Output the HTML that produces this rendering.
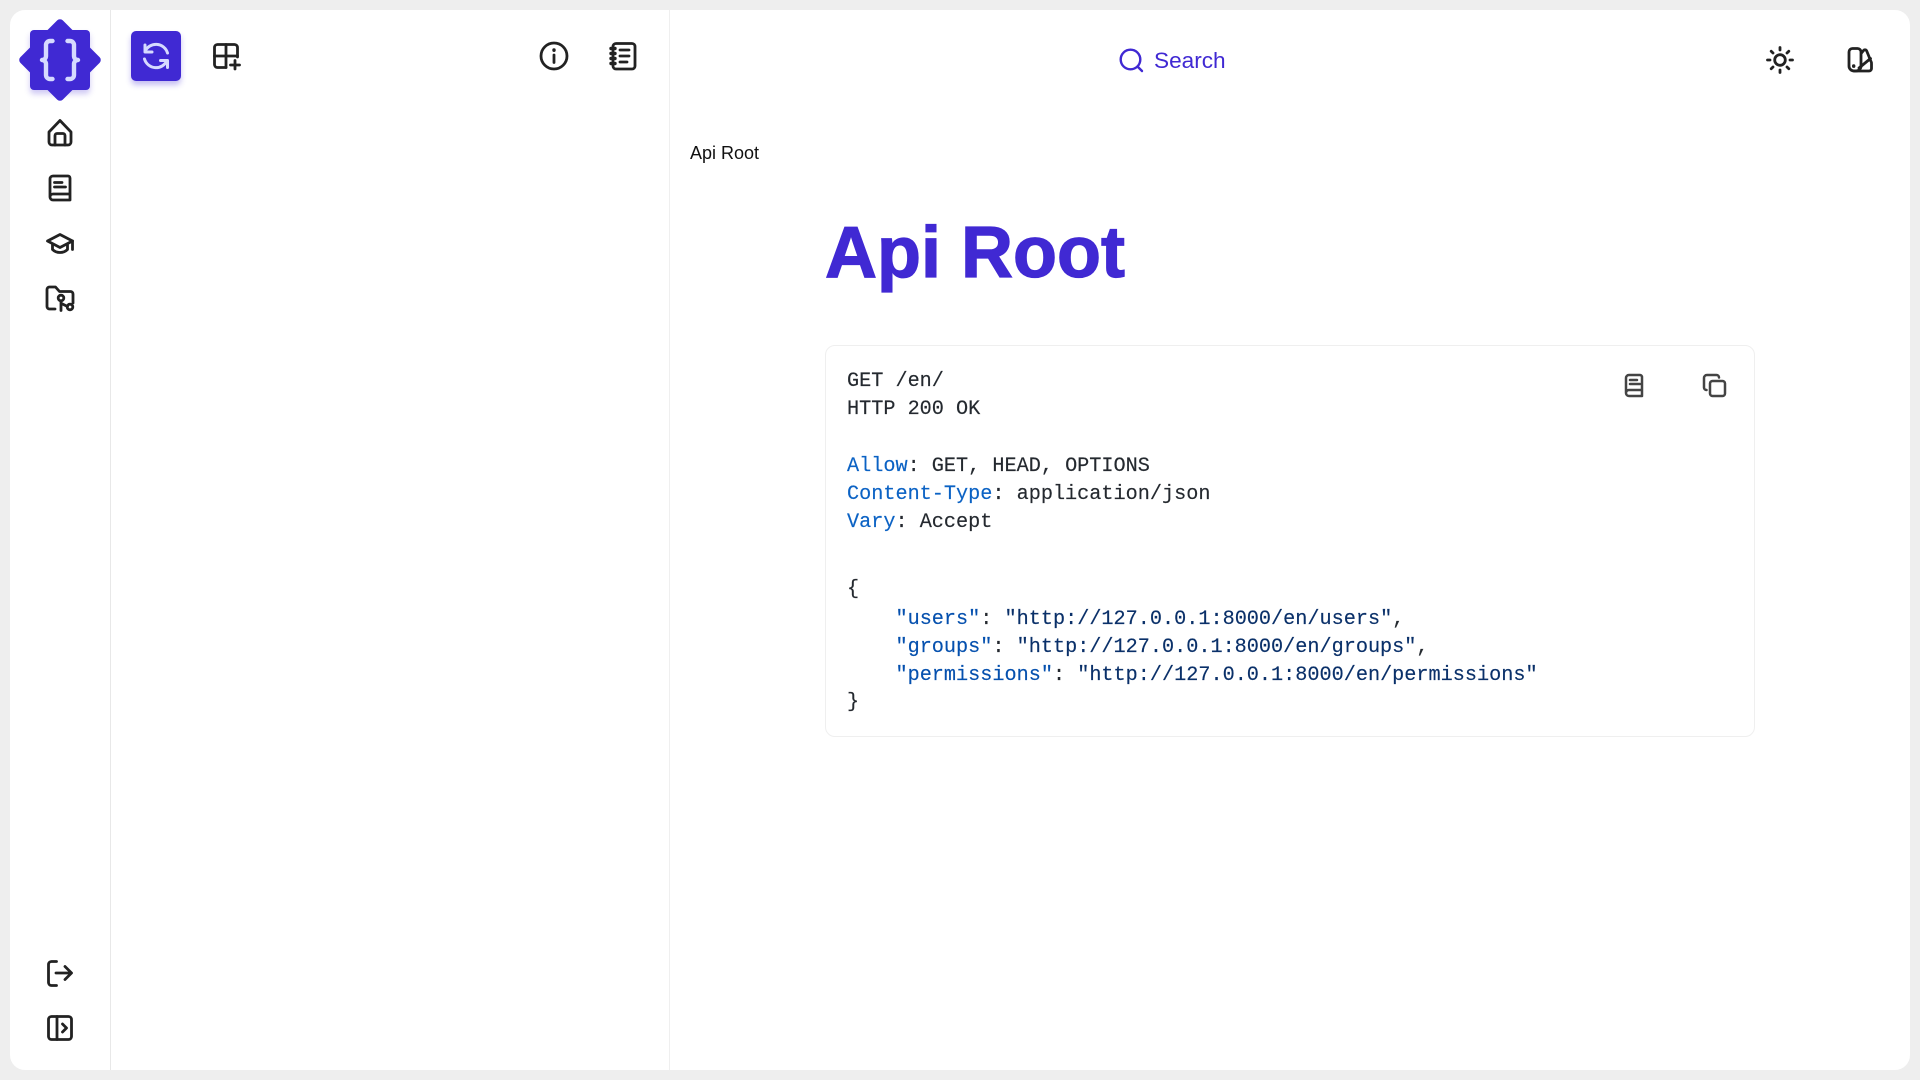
<!DOCTYPE html>
<html lang="en">
<head>
<meta charset="utf-8">
<title>Api Root</title>
<style>
html,body{margin:0;padding:0;width:1920px;height:1080px;overflow:hidden;background:#eeeeee}
.panel{position:absolute;left:10px;top:10px;width:1900px;height:1060px;background:#fff;border-radius:15px}
.vl{position:absolute;top:10px;height:1060px;width:1px}
.t{position:absolute;white-space:pre;font-family:"Liberation Sans",sans-serif}
.card{position:absolute;left:825px;top:345px;width:928px;height:390px;border:1px solid #efefef;border-radius:10px;box-sizing:content-box}
.m{position:absolute;left:847px;white-space:pre;font:20.2px/28px "Liberation Mono",monospace;color:#24292f;-webkit-text-stroke:.15px currentColor}
.k{color:#0b62c4}.j{color:#0550ae}.s{color:#0a3069}
svg.o{position:absolute;left:0;top:0}
</style>
</head>
<body>
<div class="panel"></div>
<div class="vl" style="left:110px;background:#e8e8e8"></div>
<div class="vl" style="left:669px;background:#efefef"></div>

<div style="position:absolute;left:30px;top:30px;width:60px;height:60px;background:#4029d3;border-radius:4px;box-shadow:0 4px 6px rgba(64,41,211,.25)"></div>
<div style="position:absolute;left:30px;top:30px;width:60px;height:60px;background:#4029d3;border-radius:4px;transform:rotate(45deg)"></div>
<div style="position:absolute;left:131px;top:31px;width:50px;height:50px;background:#4029d3;border-radius:5px;box-shadow:0 4px 6px rgba(64,41,211,.3)"></div>

<svg class="o" width="1920" height="1080" viewBox="0 0 1920 1080" fill="none" stroke-linecap="round" stroke-linejoin="round">
  <!-- logo braces -->
  <g stroke="#d6daff" stroke-width="4.400">
    <path d="M52.500 41h-2.500a4 4 0 0 0-4 4v11a4 4 0 0 1-4 4 4 4 0 0 1 4 4v11a4 4 0 0 0 4 4h2.500"/>
    <path d="M67.500 41h2.500a4 4 0 0 1 4 4v11a4 4 0 0 0 4 4 4 4 0 0 0-4 4v11a4 4 0 0 1-4 4h-2.500"/>
  </g>
  <!-- refresh -->
  <g stroke="#d6daff" stroke-width="3">
    <path d="M145 51.500A12 12 0 0 1 167.500 53"/>
    <path d="M145 45v7h7"/>
    <path d="M167 60.500A12 12 0 0 1 144.500 59"/>
    <path d="M167.500 67.500v-7h-7"/>
  </g>
  <g stroke="#222" stroke-width="2.800">
    <!-- home -->
    <path d="M49 132L60 120.500 71 132v10a3 3 0 0 1-3 3h-16a3 3 0 0 1-3-3z"/>
    <path d="M55 145v-9.500a2 2 0 0 1 2-2h6a2 2 0 0 1 2 2V145"/>
    <!-- book -->
    <path d="M50 197V179a3 3 0 0 1 3-3h15a2 2 0 0 1 2 2v22H53a3 3 0 0 1-3-3a3 3 0 0 1 3-3h17"/>
    <path d="M54.500 182.500H62M54.500 187H65.500"/>
    <!-- graduation cap -->
    <path d="M60 234.500l12.500 6.500-12.500 6.500-12.500-6.500z"/>
    <path d="M52.500 245v4.500c2 2 4.500 3 7.500 3s5.500-1 7.500-3V245"/>
    <path d="M72.500 241v8.500"/>
    <!-- folder git -->
    <path d="M55 309h-5.500a2.500 2.500 0 0 1-2.500-2.500V289.500a2.500 2.500 0 0 1 2.500-2.500h6l4 4.500h11a2.500 2.500 0 0 1 2.500 2.500v9"/>
    <circle cx="61" cy="298" r="2.800"/>
    <path d="M61 301v9.500M61.500 303.500l6 3"/>
    <circle cx="70" cy="307" r="2.800"/>
    <!-- grid plus -->
    <path d="M226 67.500h-8.500a3 3 0 0 1-3-3v-17a3 3 0 0 1 3-3h17a3 3 0 0 1 3 3V57"/>
    <path d="M226 44.500v23M214.500 56h23"/>
    <path d="M235 60.500v8.500M230.500 65h9"/>
    <!-- info -->
    <circle cx="554" cy="56" r="13"/>
    <path d="M554 55v7.500"/>
    <path d="M554 50v.3" stroke-width="3.400"/>
    <!-- notebook -->
    <rect x="613" y="43.500" width="22" height="25.500" rx="3"/>
    <path d="M611 48.500h4M611 53.500h4M611 58.500h4M611 63.500h4" stroke-width="3.400"/>
    <path d="M620 50h9M620 56h9M620 62h7"/>
    <!-- sun -->
    <circle cx="1780" cy="60" r="5.300"/>
    <path d="M1780 47.500v2.500M1780 70v2.500M1767.500 60h2.500M1790 60h2.500M1771.200 51.200l1.800 1.800M1787 67l1.800 1.800M1771.200 68.800l1.800-1.800M1787 53l1.800-1.800"/>
    <!-- palette -->
    <path d="M1849 52a3.500 3.500 0 0 1 3.500-3.500h5a3.500 3.500 0 0 1 3.500 3.500v14a5 5 0 0 1-5 5h-2a5 5 0 0 1-5-5z"/>
    <path d="M1861.500 53l2-2.500a2 2 0 0 1 3 0l4.500 11a2.500 2.500 0 0 1 .5 2V68.500a2.500 2.500 0 0 1-2.500 2.500h-15"/>
    <path d="M1859 68l11.500-9.500"/>
    <path d="M1853.700 66v.2" stroke-width="3.400"/>
    <!-- logout -->
    <path d="M56.500 961.500h-5a3 3 0 0 0-3 3v18a3 3 0 0 0 3 3h5"/>
    <path d="M56 973h15.500M65 966.500l6.500 6.500-6.500 6.500"/>
    <!-- panel -->
    <rect x="48.500" y="1016.500" width="23" height="23" rx="3"/>
    <path d="M57 1016.500v23"/>
    <path d="M62.500 1024l4 4-4 4"/>
  </g>
  <!-- search -->
  <g stroke="#4029d3" stroke-width="2.400">
    <circle cx="1130.500" cy="59.500" r="9.800"/>
    <path d="M1137.500 66.500l4.500 4.500"/>
  </g>
  <!-- card icons -->
  <g stroke="#444" stroke-width="2.500">
    <path d="M1626 393V378a3 3 0 0 1 3-3h11a2 2 0 0 1 2 2v19h-13a3 3 0 0 1-3-3a3 3 0 0 1 3-3h13"/>
    <path d="M1630 380h7M1630 384h10"/>
    <rect x="1710" y="381" width="15" height="15" rx="2.500"/>
    <path d="M1706.500 390a2.500 2.500 0 0 1-2.500-2.500V378a3 3 0 0 1 3-3h9.500a2.500 2.500 0 0 1 2.500 2.500"/>
  </g>
</svg>

<div class="t" style="left:1154px;top:47px;font-size:22.600px;line-height:28px;color:#4029d3">Search</div>
<div class="t" style="left:690px;top:142px;font-size:18px;line-height:22px;color:#111">Api Root</div>
<div class="t" style="left:825px;top:211px;font-size:72px;line-height:84px;font-weight:bold;color:#4029d3;-webkit-text-stroke:1.2px #4029d3">Api Root</div>

<div class="card"></div>
<div class="m" style="top:368px">GET /en/</div>
<div class="m" style="top:396px">HTTP 200 OK</div>
<div class="m" style="top:453px"><span class="k">Allow</span>: GET, HEAD, OPTIONS</div>
<div class="m" style="top:481px"><span class="k">Content-Type</span>: application/json</div>
<div class="m" style="top:509px"><span class="k">Vary</span>: Accept</div>
<div class="m" style="top:576px">{</div>
<div class="m" style="top:606px">    <span class="j">"users"</span>: <span class="s">"http://127.0.0.1:8000/en/users"</span>,</div>
<div class="m" style="top:634px">    <span class="j">"groups"</span>: <span class="s">"http://127.0.0.1:8000/en/groups"</span>,</div>
<div class="m" style="top:662px">    <span class="j">"permissions"</span>: <span class="s">"http://127.0.0.1:8000/en/permissions"</span></div>
<div class="m" style="top:689px">}</div>
</body>
</html>
